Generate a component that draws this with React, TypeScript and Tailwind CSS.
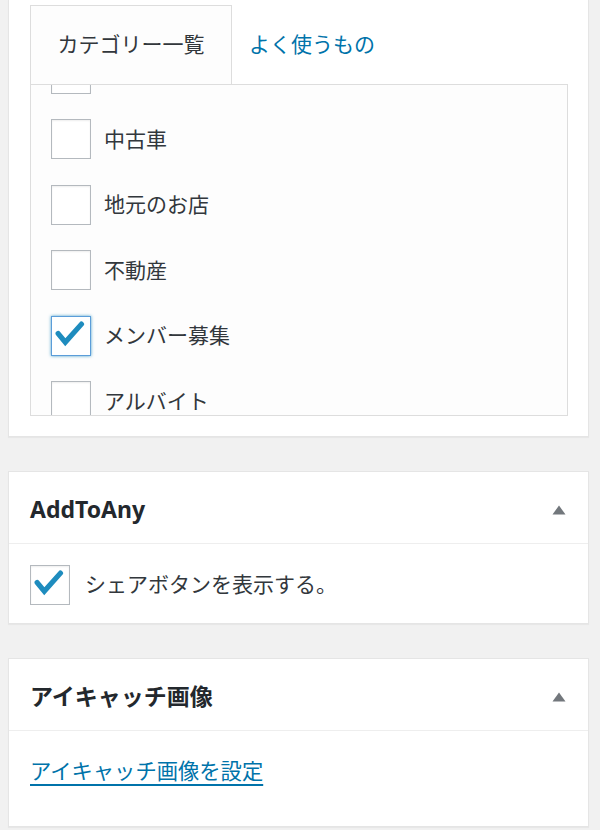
import React from "react";

const FONT = "font-['Noto_Sans','Noto_Sans_CJK_JP',sans-serif]";

function Check() {
  return (
    <svg width="40" height="40" viewBox="0 0 40 40" className="block">
      <polyline
        points="6.5,17.5 14,26.5 31,7.5"
        fill="none"
        stroke="#1e8cbe"
        strokeWidth="5.5"
        strokeLinecap="round"
        strokeLinejoin="miter"
      />
    </svg>
  );
}

function Box({ checked = false, focus = false }: { checked?: boolean; focus?: boolean }) {
  return (
    <span
      className={
        focus
          ? "box-border w-10 h-10 shrink-0 bg-white border-[1.5px] border-[#5b9dd9] shadow-[0_0_3px_rgba(30,140,190,0.8)] flex items-center justify-center"
          : "box-border w-10 h-10 shrink-0 bg-white border-[1.5px] border-[#b4b9be] shadow-[inset_0_1px_2px_rgba(0,0,0,0.07)] flex items-center justify-center"
      }
    >
      {checked ? <Check /> : null}
    </span>
  );
}

function Toggle() {
  return (
    <svg width="14" height="10" viewBox="0 0 14 10" className="block">
      <polygon points="7,0.5 13.5,9.5 0.5,9.5" fill="#72777c" />
    </svg>
  );
}

const items = [
  { label: "", checked: false },
  { label: "中古車", checked: false },
  { label: "地元のお店", checked: false },
  { label: "不動産", checked: false },
  { label: "メンバー募集", checked: true },
  { label: "アルバイト", checked: false },
];

export default function App() {
  return (
    <div className={`w-[600px] h-[830px] overflow-hidden bg-[#f1f1f1] pl-2 pr-[11px] ${FONT}`}>
      {/* Categories panel */}
      <div className="box-border h-[437px] bg-white border-x border-b border-[#e5e5e5] shadow-[0_1px_1px_rgba(0,0,0,0.04)] pl-[21px] pr-[20px] pt-[5px]">
        <div className="flex h-[79px]">
          <div className="box-border w-[202px] border border-b-0 border-[#dddddd] bg-[#fdfdfd] flex items-center justify-center text-[21px] text-[#32373c]">
            カテゴリー一覧
          </div>
          <div className="pl-[17px] flex items-center text-[21px] text-[#0073aa]">よく使うもの</div>
        </div>
        <div className="box-border h-[332px] border border-[#dddddd] bg-[#fdfdfd] overflow-hidden pl-[20px]">
          <div className="-mt-[44px]">
            {items.map((it, i) => (
              <div key={i} className="h-[65.5px] flex items-center gap-[13px] text-[21px] text-[#32373c]">
                <Box checked={it.checked} focus={it.checked} />
                <span>{it.label}</span>
              </div>
            ))}
          </div>
        </div>
      </div>

      {/* AddToAny */}
      <div className="mt-[34px] box-border bg-white border border-[#e5e5e5] shadow-[0_1px_1px_rgba(0,0,0,0.04)]">
        <div className="h-[72px] border-b border-[#eeeeee] flex items-center justify-between pl-[21px] pr-[22px] pt-[4px]">
          <span className="text-[23px] font-bold text-[#23282d]">AddToAny</span>
          <Toggle />
        </div>
        <div className="h-[79px] flex items-center gap-[15px] pl-[21px] pt-[2px]">
          <Box checked />
          <span className="text-[21px] text-[#32373c]">シェアボタンを表示する。</span>
        </div>
      </div>

      {/* Featured image */}
      <div className="mt-[34px] box-border bg-white border border-[#e5e5e5] shadow-[0_1px_1px_rgba(0,0,0,0.04)]">
        <div className="h-[72px] border-b border-[#eeeeee] flex items-center justify-between pl-[21px] pr-[22px] pt-[4px]">
          <span className="text-[23px] font-bold text-[#23282d]">アイキャッチ画像</span>
          <Toggle />
        </div>
        <div className="h-[95px] pl-[21px] pt-[24px]">
          <a href="#" className="text-[21.3px] text-[#0073aa] underline underline-offset-[5px] decoration-[1.5px]">
            アイキャッチ画像を設定
          </a>
        </div>
      </div>
    </div>
  );
}
